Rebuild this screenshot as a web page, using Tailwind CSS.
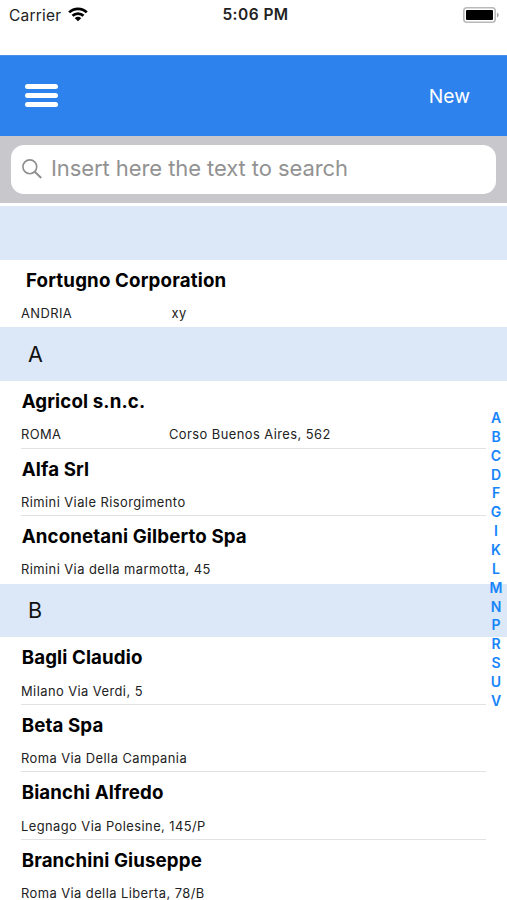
<!DOCTYPE html>
<html lang="en">
<head>
<meta charset="utf-8">
<title>Customers</title>
<script src="https://cdn.jsdelivr.net/npm/@tailwindcss/browser@4"></script>
</head>
<body class="relative h-[900px] w-[507px] overflow-hidden bg-white font-['Inter','Liberation_Sans',sans-serif] text-black">
<header class="grid h-[55px] grid-cols-3 items-start pt-[5px] pr-2 pl-[9px] leading-5 text-[#222]">
  <div class="flex items-center gap-[7px] text-[15.5px]"><span class="mt-px tracking-[.2px]">Carrier</span>
    <svg class="-mt-[2px] h-[15px] w-5" viewBox="0 0 20 15" fill="none" stroke="#000" stroke-width="2.7"><path d="M1.2 5.4a12.5 12.5 0 0 1 17.6 0M4.5 8.8a7.8 7.8 0 0 1 11 0"/><path d="M10 14.3 6.8 11.2a4.5 4.5 0 0 1 6.4 0z" fill="#000" stroke="none"/></svg>
  </div>
  <div class="pl-[3px] text-center text-[15.5px] font-semibold tracking-[.45px] whitespace-nowrap">5:06 PM</div>
  <svg class="mt-[2px] h-4 w-[37px] justify-self-end" viewBox="0 0 37 16"><rect x="1.8" y=".8" width="31.4" height="14.4" rx="3" fill="#fff" stroke="#b9b9b9" stroke-width="1.6"/><rect x="4" y="3" width="27" height="10" rx="1" fill="#000"/><path d="M35 5.5c2.2 1 2.2 4 0 5z" fill="#a5a5a5"/></svg>
</header>
<nav class="flex h-[81px] items-center justify-between border-t border-[#4b91e9] bg-[#2e82ed] pr-[37px] pl-[25px] text-white">
  <div class="-mt-px flex flex-col gap-1"><i class="h-[5.3px] w-[33px] rounded-full bg-white"></i><i class="h-[5.3px] w-[33px] rounded-full bg-white"></i><i class="h-[5.3px] w-[33px] rounded-full bg-white"></i></div>
  <span class="mt-px text-[19.3px]">New</span>
</nav>
<div class="h-[67px] bg-[#c8c7cc] pt-[9px] pr-[11px] pl-[11px]">
  <div class="flex h-[49px] items-center rounded-[13px] bg-white pl-[11px] text-[#929292]">
    <svg class="-mt-px h-5 w-5" viewBox="0 0 20 20" fill="none" stroke="#8e8e8e" stroke-width="1.6"><circle cx="7.8" cy="7.8" r="6.9"/><path d="m12.8 12.8 6.4 6.2" stroke-width="2"/></svg>
    <span class="-mt-[2px] ml-[9px] text-[22px] tracking-[-.08px] whitespace-nowrap">Insert here the text to search</span>
  </div>
</div>
<main id="list" class="pt-[3px]"></main>
<aside id="index" class="absolute top-[409px] right-0 flex w-[22px] flex-col text-center text-[14px] font-semibold text-[#1684fb]"></aside>
<script>
const sections = [
  ["", [["Fortugno Corporation", "ANDRIA", "xy"]]],
  ["A", [["Agricol s.n.c.", "ROMA", "Corso Buenos Aires, 562"], ["Alfa Srl", "Rimini Viale Risorgimento"], ["Anconetani Gilberto Spa", "Rimini Via della marmotta, 45"]]],
  ["B", [["Bagli Claudio", "Milano Via Verdi, 5"], ["Beta Spa", "Roma Via Della Campania"], ["Bianchi Alfredo", "Legnago Via Polesine, 145/P"], ["Branchini Giuseppe", "Roma Via della Liberta, 78/B"]]]
];
document.getElementById("list").innerHTML = sections.map(([letter, rows]) =>
  `<section><h2 class="flex h-[53.8px] items-center bg-[#dce8f8] pl-7 text-[21.5px] text-[#111]">${letter}</h2>` +
  rows.map(([name, city, street], i) =>
    `<article class="mr-[21px] ml-[21px] h-[67.5px] pt-[8px] ${i < rows.length - 1 ? "border-b border-[#e2e2e2]" : ""}">
      <h3 class="text-[18.7px] leading-[26px] font-[670] whitespace-nowrap ${letter ? "pl-[.7px] tracking-[.12px]" : "pl-[5px] tracking-[.16px]"}">${name}</h3>
      <p class="mt-[11.2px] flex text-[12.9px] leading-[18px] tracking-[.44px] whitespace-nowrap text-[#222]"><span class="${street ? letter ? "w-[148px]" : "w-[150.5px]" : ""}">${city}</span>${street ? `<span>${street}</span>` : ""}</p>
    </article>`).join("") + `</section>`).join("");
document.getElementById("index").innerHTML = [..."ABCDFGIKLMNPRSUV"].map(c => `<span class="h-[18.87px] leading-[18.87px]">${c}</span>`).join("");
</script>
</body>
</html>
